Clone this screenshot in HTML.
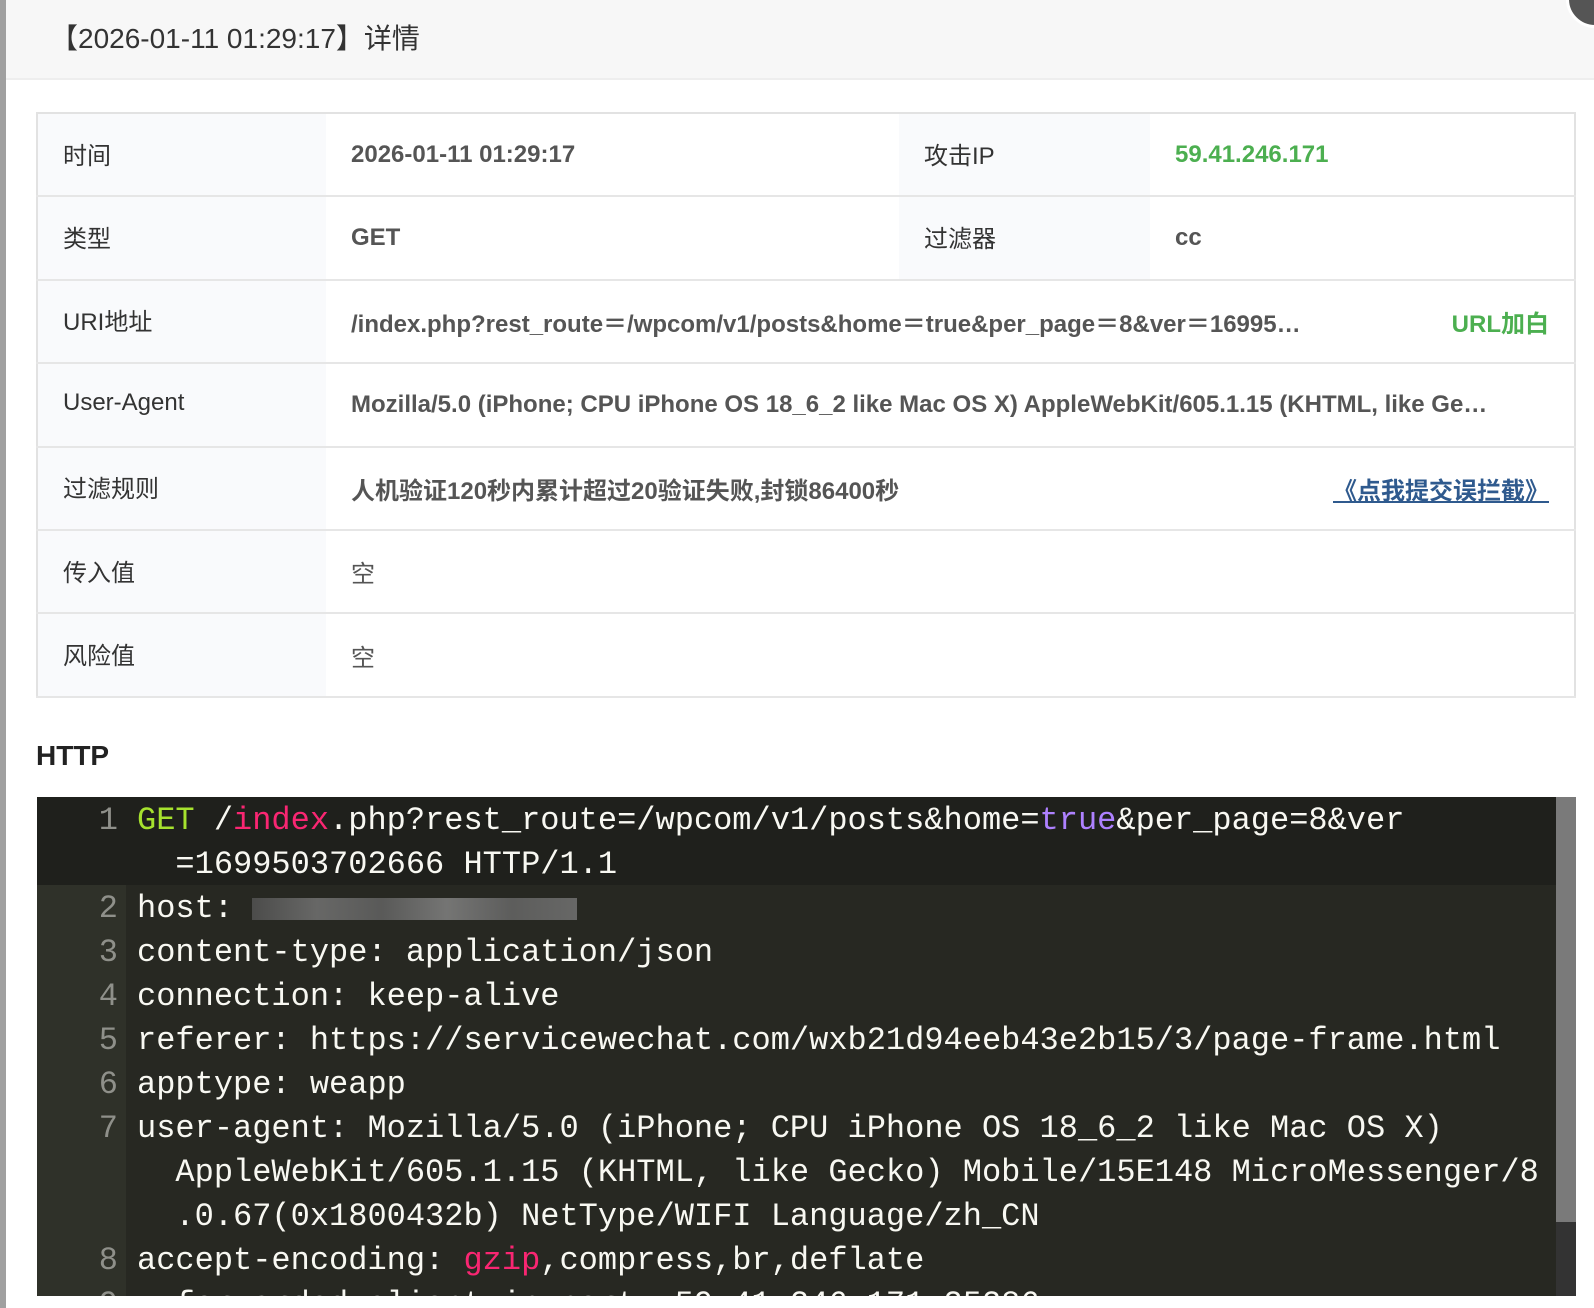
<!DOCTYPE html>
<html><head><meta charset="utf-8"><style>
*{margin:0;padding:0;box-sizing:border-box}
body{width:1594px;height:1308px;background:#fff;overflow:hidden;position:relative;font-family:"Liberation Sans","Noto Sans CJK SC",sans-serif;color:#333}
.strip{position:absolute;left:0;top:0;width:6px;height:1308px;background:#a0a0a0}
.hdr{position:absolute;left:6px;top:0;width:1588px;height:80px;background:#f7f7f7;border-bottom:2px solid #eee}
.hdr span{position:absolute;left:44px;top:17px;font-size:28px;color:#333}
.close{position:absolute;left:1566px;top:-30px;width:58px;height:58px;border-radius:50%;background:#555;border:3px solid #fff}
table{position:absolute;left:36px;top:112px;width:1540px;border-collapse:collapse;border:2px solid #e2e2e2;font-size:24px;table-layout:fixed}
td{height:83.4px;border-bottom:2px solid #e6e6e6;padding:0 25px;vertical-align:middle}
td.l{background:#f9fafc;color:#333;padding-bottom:3px}
td.v{color:#555;font-weight:bold}
.row{display:flex;justify-content:space-between;align-items:center}
.g{color:#4caf50;font-weight:bold}
.lk{color:#2f5a8e;font-weight:bold;text-decoration:underline}
h3{position:absolute;left:36px;top:740px;font-size:28px;color:#222}
.code{position:absolute;left:37px;top:797px;width:1539px;height:499px;background:#272822;overflow:hidden;font-family:"Liberation Mono","DejaVu Sans Mono",monospace;font-size:32px;color:#f8f8f2}
.gut{position:absolute;left:0;top:0;width:89px;height:100%;background:#2f3129}
.act{position:absolute;left:0;top:0;width:1519px;height:88px;background:#1f201c}
.sb{position:absolute;right:0;top:0;width:20px;height:100%;background:#333}
.sb div{height:425px;background:#7a7a7a}
.ln{position:absolute;left:0;width:81px;text-align:right;color:#8f908a}
.tx{position:absolute;left:100px;white-space:pre}
.k{color:#a6e22e}.r{color:#f92672}.p{color:#ae81ff}
.blur{display:inline-block;width:325px;height:22px;vertical-align:middle;background:linear-gradient(90deg,#555 0,#777 20%,#666 40%,#888 60%,#6a6a6a 80%,#777 100%);opacity:.8}
</style></head><body>
<div class="strip"></div>
<div class="hdr"><span>【2026-01-11 01:29:17】详情</span></div>
<div class="close"></div>
<table>
<colgroup><col style="width:289px"><col style="width:573px"><col style="width:251px"><col></colgroup>
<tr><td class="l">时间</td><td class="v">2026-01-11 01:29:17</td><td class="l">攻击IP</td><td class="g">59.41.246.171</td></tr>
<tr><td class="l">类型</td><td class="v">GET</td><td class="l">过滤器</td><td class="v">cc</td></tr>
<tr><td class="l">URI地址</td><td class="v" colspan="3"><div class="row"><span>/index.php?rest_route＝/wpcom/v1/posts&amp;home＝true&amp;per_page＝8&amp;ver＝16995…</span><span class="g">URL加白</span></div></td></tr>
<tr><td class="l">User-Agent</td><td class="v" colspan="3">Mozilla/5.0 (iPhone; CPU iPhone OS 18_6_2 like Mac OS X) AppleWebKit/605.1.15 (KHTML, like Ge…</td></tr>
<tr><td class="l">过滤规则</td><td class="v" colspan="3"><div class="row"><span>人机验证120秒内累计超过20验证失败,封锁86400秒</span><span class="lk">《点我提交误拦截》</span></div></td></tr>
<tr><td class="l">传入值</td><td class="v" colspan="3" style="font-weight:normal">空</td></tr>
<tr><td class="l">风险值</td><td class="v" colspan="3" style="font-weight:normal">空</td></tr>
</table>
<h3>HTTP</h3>
<div class="code">
<div class="gut"></div><div class="act"></div>
<div class="sb"><div></div></div>
<div class="ln" style="top:5px">1</div><div class="tx" style="top:5px"><span class="k">GET</span> /<span class="r">index</span>.php?rest_route=/wpcom/v1/posts&amp;home=<span class="p">true</span>&amp;per_page=8&amp;ver</div>
<div class="tx" style="top:49px">  =1699503702666 HTTP/1.1</div>
<div class="ln" style="top:93px">2</div><div class="tx" style="top:93px">host: <span class="blur"></span></div>
<div class="ln" style="top:137px">3</div><div class="tx" style="top:137px">content-type: application/json</div>
<div class="ln" style="top:181px">4</div><div class="tx" style="top:181px">connection: keep-alive</div>
<div class="ln" style="top:225px">5</div><div class="tx" style="top:225px">referer: https://servicewechat.com/wxb21d94eeb43e2b15/3/page-frame.html</div>
<div class="ln" style="top:269px">6</div><div class="tx" style="top:269px">apptype: weapp</div>
<div class="ln" style="top:313px">7</div><div class="tx" style="top:313px">user-agent: Mozilla/5.0 (iPhone; CPU iPhone OS 18_6_2 like Mac OS X)</div>
<div class="tx" style="top:357px">  AppleWebKit/605.1.15 (KHTML, like Gecko) Mobile/15E148 MicroMessenger/8</div>
<div class="tx" style="top:401px">  .0.67(0x1800432b) NetType/WIFI Language/zh_CN</div>
<div class="ln" style="top:445px">8</div><div class="tx" style="top:445px">accept-encoding: <span class="r">gzip</span>,compress,br,deflate</div>
<div class="ln" style="top:489px">9</div><div class="tx" style="top:489px">x-forwarded-client-ip-port: 59.41.246.171:35386</div>
</div>
</body></html>
